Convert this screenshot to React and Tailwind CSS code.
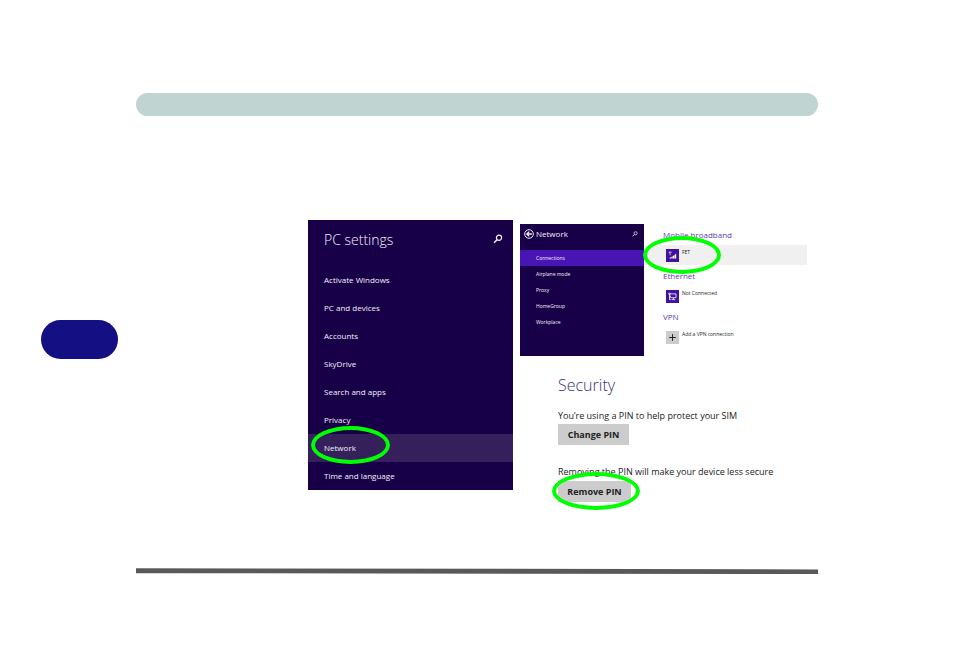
import { useState } from 'react'

// Icons
const SearchIcon = ({ className }) => (
  <svg className={className} fill="none" viewBox="0 0 10 10" stroke="currentColor">
    <circle cx="6" cy="3.8" r="2.6" strokeWidth={1.2} />
    <path strokeWidth={1.5} d="M4.1 5.7L1 8.8" />
  </svg>
)

const BackIcon = () => (
  <svg className="h-[10px] w-[10px]" fill="none" viewBox="0 0 10 10" stroke="currentColor">
    <circle cx="5" cy="5" r="4.3" strokeWidth={1} />
    <path strokeWidth={1.3} d="M7.8 5H3M5.2 2.6L2.8 5l2.4 2.4" />
  </svg>
)

const SignalIcon = () => (
  <svg className="h-[13px] w-[13px]" viewBox="0 0 13 13" fill="currentColor">
    <path fill="none" stroke="currentColor" strokeWidth={0.6} d="M2.8 3h2.6L4.1 4.5zM4.1 4.5v1.8" />
    <path d="M3.6 9.6V8.8l1.4-.6v1.4zM5.3 9.6V8l1.3-.7v2.3zM6.9 9.6V7.1l1.3-.8v3.3zM8.5 9.6V6.1l1.7-1.3v4.8z" />
  </svg>
)

const EthernetIcon = () => (
  <svg className="h-[13px] w-[13px]" viewBox="0 0 13 13" fill="none" stroke="currentColor" strokeWidth={0.8}>
    <path d="M5 3.9h5v3.8H4.4V5.6M7.4 7.7v1.8M5.6 9.6h3.6M2.8 3.1h1.5v1.4H2.8zM3.5 4.5v5.1h1.3" />
  </svg>
)

const PlusIcon = () => (
  <svg className="h-[13px] w-[13px]" viewBox="0 0 13 13" stroke="currentColor" strokeWidth={1}>
    <path d="M6.5 3.2v6.6M3.2 6.5h6.6" />
  </svg>
)

const settings = [
  'Activate Windows',
  'PC and devices',
  'Accounts',
  'SkyDrive',
  'Search and apps',
  'Privacy',
  'Network',
  'Time and language',
]

const networkPages = ['Connections', 'Airplane mode', 'Proxy', 'HomeGroup', 'Workplace']

const connections = [
  { title: 'Mobile broadband', label: 'FET', icon: SignalIcon, row: 'bg-[#f0f0f0]', tile: 'bg-[#40109f] text-white', marked: true },
  { title: 'Ethernet', label: 'Not Connected', icon: EthernetIcon, row: '', tile: 'bg-[#40109f] text-white' },
  { title: 'VPN', label: 'Add a VPN connection', icon: PlusIcon, row: '', tile: 'bg-[#cccccc] text-[#222222]' },
]

// Green ring drawn over the item to click
const Ring = ({ className }) => (
  <span className={`pointer-events-none absolute rounded-[50%] border-4 border-[#00ff00] ${className}`} />
)

const SettingsPanel = () => {
  const [active, setActive] = useState('Network')
  return (
    <nav className="w-[205px] shrink-0 bg-[#180048] text-[#f4f1fa]">
      <div className="flex h-[46px] items-center justify-between pr-[10px] pl-4 pb-2">
        <h2 className="text-[14px] font-light">PC settings</h2>
        <button aria-label="Search settings">
          <SearchIcon className="h-[10px] w-[10px]" />
        </button>
      </div>
      {settings.map((item) => (
        <div key={item} className="relative">
          <button
            onClick={() => setActive(item)}
            className={`block h-7 w-full pl-4 text-left text-[8px] ${active === item ? 'bg-[#35205c]' : ''}`}
          >
            {item}
          </button>
          {item === 'Network' && <Ring className="-top-2 left-[3px] h-[38px] w-[79px]" />}
        </div>
      ))}
    </nav>
  )
}

const NetworkNav = () => {
  const [active, setActive] = useState('Connections')
  return (
    <nav className="w-[124px] shrink-0 bg-[#180048] text-[#f4f1fa]">
      <div className="flex h-[26px] items-center gap-[2px] pr-[6px] pb-[6px] pl-1">
        <button aria-label="Back">
          <BackIcon />
        </button>
        <h3 className="flex-1 text-[8px]">Network</h3>
        <button aria-label="Search network">
          <SearchIcon className="h-[6px] w-[6px]" />
        </button>
      </div>
      {networkPages.map((page) => (
        <button
          key={page}
          onClick={() => setActive(page)}
          className={`block h-4 w-full pt-[2px] pl-4 text-left text-[5px] ${active === page ? 'bg-[#4814b4]' : ''}`}
        >
          {page}
        </button>
      ))}
    </nav>
  )
}

const ConnectionList = () => (
  <div className="flex-1">
    {connections.map(({ title, label, icon: Icon, row, tile, marked }) => (
      <section key={title} className="relative">
        <h3 className="flex h-[21px] items-center pl-[19px] text-[8px] text-[#5a3cae]">{title}</h3>
        <button className={`flex h-5 w-full items-center gap-[3px] pl-[22px] text-left text-[5px] text-[#222222] ${row}`}>
          <span className={tile}>
            <Icon />
          </span>
          <span className="pb-1">{label}</span>
        </button>
        {marked && <Ring className="top-3 -left-px h-[38px] w-[78px]" />}
      </section>
    ))}
  </div>
)

const Security = () => (
  <section className="pt-[17px] pl-[38px] text-[9px] text-[#222222]">
    <h2 className="text-[16px] leading-6 font-light text-[#3d3270]">Security</h2>
    <p className="mt-[11px] leading-4">You’re using a PIN to help protect your SIM</p>
    <button className="h-[21px] w-[71px] bg-[#cccccc] font-bold">Change PIN</button>
    <p className="mt-[19px] leading-4">Removing the PIN will make your device less secure</p>
    <div className="relative mt-px w-[73px]">
      <button className="h-[21px] w-full bg-[#cccccc] font-bold">Remove PIN</button>
      <Ring className="-top-[9px] -left-[6px] h-[38px] w-[88px]" />
    </div>
  </section>
)

export default function App() {
  return (
    <div className="flex min-h-screen bg-white font-['Open_Sans','Noto_Sans',sans-serif]">
      <aside className="w-[136px] shrink-0 pt-80 pl-[41px]">
        <div className="h-[39px] w-[77px] rounded-full bg-[#140f82]" />
      </aside>

      <main className="flex-1 pt-[93px] pr-[136px] pb-24">
        <header className="h-[23px] rounded-full bg-[#c0d5d2]" />

        <div className="mt-[104px] flex items-start gap-[7px] pr-[11px] pl-[172px]">
          <SettingsPanel />
          <div className="flex-1 pt-1">
            <div className="flex h-[132px]">
              <NetworkNav />
              <ConnectionList />
            </div>
            <Security />
          </div>
        </div>

        {/* Footer rule */}
        <svg className="mt-[66px] block h-[6px] w-full" viewBox="0 0 682 6" preserveAspectRatio="none" fill="#595959">
          <path d="M0 0.2L682 1.4V6L0 5.2z" />
        </svg>
      </main>
    </div>
  )
}
